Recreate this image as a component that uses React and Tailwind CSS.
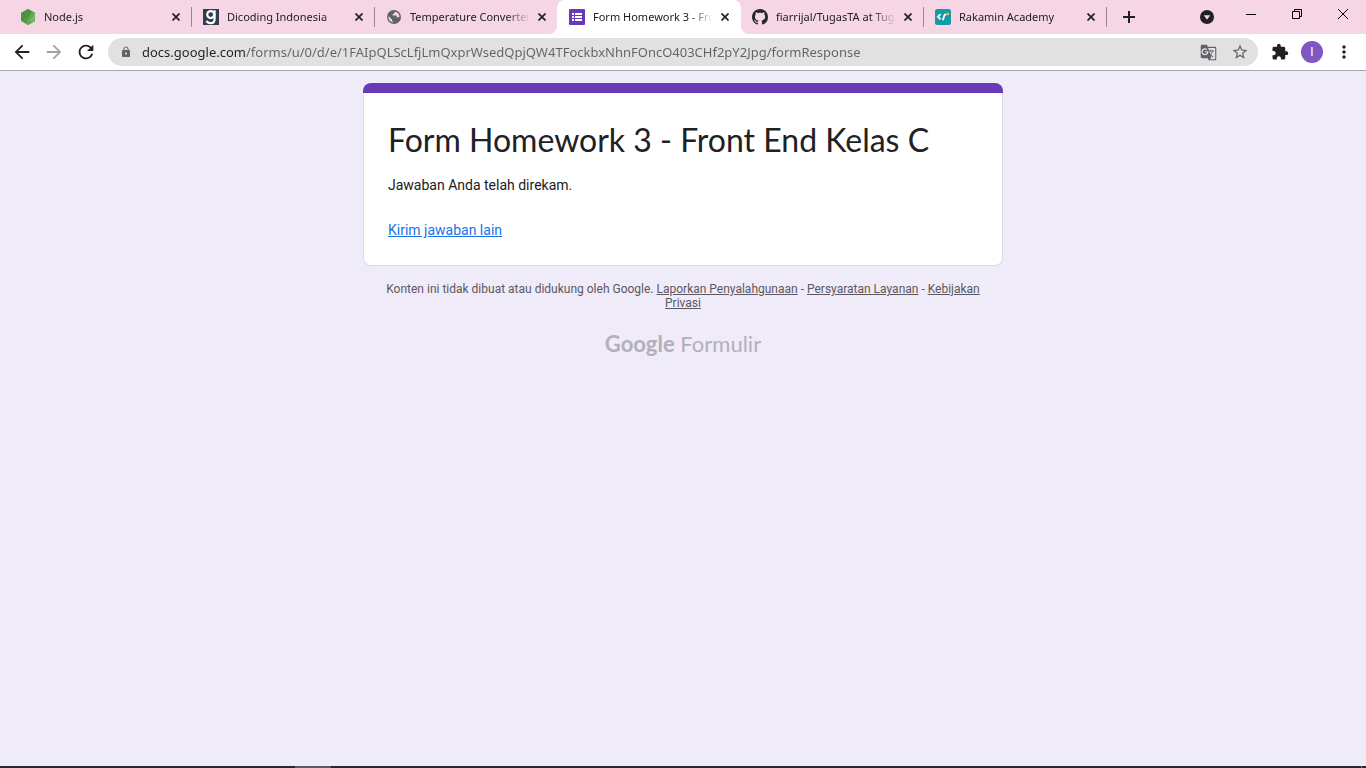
import React from "react";
import {
  MdArrowBack,
  MdArrowForward,
  MdExtension,
  MdGTranslate,
  MdLock,
  MdMoreVert,
  MdRefresh,
  MdStarBorder,
} from "react-icons/md";

function NodeIcon() {
  return (
    <svg viewBox="0 0 16 16" className="size-4" aria-hidden="true">
      <path d="M8 0 15 4v8l-7 4-7-4V4z" fill="#539e43" />
      <path d="M8 0 15 4 1 12V4z" fill="#4c9440" />
      <path d="M12 2.300 15 4v8l-7 4-2-1.200z" fill="#62ab50" />
      <path d="M15 4v8l-3 1.700-3-2.200z" fill="#7cb872" opacity=".7" />
    </svg>
  );
}

function DicodingIcon() {
  return (
    <svg viewBox="0 0 16 16" className="size-4" aria-hidden="true">
      <path d="M0 0h16v16H0z" fill="#2d3e50" />
      <g fill="none" stroke="#fff" strokeWidth="2.200">
        <circle cx="7.700" cy="5.600" r="3.500" />
        <path d="M11.600 1.200v8.800c0 3-1.500 4.200-3.900 4.200-2.200 0-3.500-.8-4-2.500" />
      </g>
    </svg>
  );
}

function GlobeIcon() {
  return (
    <svg viewBox="0 0 16 16" className="size-4" aria-hidden="true">
      <circle cx="8" cy="8" r="7" fill="#5f6368" />
      <path
        d="M2.600 7.200 6 10.400v1c0 .7.500 1.200 1.200 1.200v1c-2.700-.4-4.800-2.700-4.800-5.500 0-.3.100-.6.200-.9zM9.800 2.700c1.900.7 3.400 2.500 3.700 4.600-.4.800-.9 1.200-1.700 1.200-.8 0-1.200-.5-1.200-1.200 0-.6-.3-.9-.9-.9H6.600V5.300c.8 0 1.200-.4 1.200-1.100 0-.6.400-.8 1-.8.6 0 1-.3 1-.7z"
        fill="#f6d5e4"
      />
    </svg>
  );
}

function FormsIcon() {
  return (
    <svg viewBox="0 0 16 16" className="size-4" aria-hidden="true">
      <rect width="16" height="16" rx="1" fill="#673ab7" />
      <path
        d="M3 4h2v2H3zM6 4h7v2H6zM3 7h2v2H3zM6 7h7v2H6zM3 10h2v2H3zM6 10h7v2H6z"
        fill="#fff"
      />
    </svg>
  );
}

function GithubIcon() {
  return (
    <svg viewBox="0 0 16 16" className="size-4" aria-hidden="true">
      <path
        fill="#24292e"
        d="M8 0C3.58 0 0 3.58 0 8c0 3.54 2.29 6.53 5.47 7.59.4.07.55-.17.55-.38 0-.19-.01-.82-.01-1.49-2.01.37-2.53-.49-2.69-.94-.09-.23-.48-.94-.82-1.13-.28-.15-.68-.52-.01-.53.63-.01 1.08.58 1.23.82.72 1.21 1.87.87 2.33.66.07-.52.28-.87.51-1.07-1.78-.2-3.64-.89-3.64-3.95 0-.87.31-1.59.82-2.15-.08-.2-.36-1.02.08-2.12 0 0 .67-.21 2.2.82.64-.18 1.32-.27 2-.27s1.36.09 2 .27c1.53-1.04 2.2-.82 2.2-.82.44 1.1.16 1.92.08 2.12.51.56.82 1.27.82 2.15 0 3.07-1.87 3.75-3.65 3.95.29.25.54.73.54 1.48 0 1.07-.01 1.93-.01 2.2 0 .21.15.46.55.38A8.01 8.01 0 0 0 16 8c0-4.42-3.58-8-8-8z"
      />
    </svg>
  );
}

function RakaminIcon() {
  return (
    <svg viewBox="0 0 16 16" className="size-4" aria-hidden="true">
      <rect width="16" height="16" rx="2.500" fill="#149aa5" />
      <g fill="none" stroke="#fff" strokeWidth="1.800">
        <path d="M5.600 5.200 2.900 7.800l2.700 2.500" />
        <path d="M7.900 11.300 9.200 6.700c.3-1 .8-1.400 1.700-1.400h.6" />
      </g>
      <circle cx="13" cy="5" r="1.300" fill="#f9b91c" />
    </svg>
  );
}

const tabs = [
  { title: "Node.js", icon: <NodeIcon /> },
  { title: "Dicoding Indonesia", icon: <DicodingIcon /> },
  { title: "Temperature Converter", icon: <GlobeIcon /> },
  { title: "Form Homework 3 - Front End", icon: <FormsIcon />, active: true },
  { title: "fiarrijal/TugasTA at TugasTA", icon: <GithubIcon /> },
  { title: "Rakamin Academy", icon: <RakaminIcon /> },
];

function Tab({ title, icon, active, divided }) {
  return (
    <div
      className={
        "relative flex min-w-0 items-center pl-3 " +
        (active ? "-mr-px w-[184px] rounded-t-lg bg-white pr-2" : "w-[183px] pr-[7px]")
      }
    >
      {divided && <span className="absolute left-0 top-[7px] h-5 w-px bg-[#9a8791]" />}
      {active && (
        <>
          <svg viewBox="0 0 8 8" className="absolute -left-2 bottom-0 size-2" aria-hidden="true">
            <path d="M8 0v8H0a8 8 0 0 0 8-8z" fill="#fff" />
          </svg>
          <svg viewBox="0 0 8 8" className="absolute -right-2 bottom-0 size-2" aria-hidden="true">
            <path d="M0 0v8h8a8 8 0 0 1-8-8z" fill="#fff" />
          </svg>
        </>
      )}
      <span className="flex size-4 shrink-0 items-center justify-center">{icon}</span>
      <a
        href="#"
        className="ml-2 min-w-0 flex-1 overflow-hidden whitespace-nowrap text-[11px] leading-4 text-[#202124] [mask-image:linear-gradient(to_right,#000_calc(100%-24px),transparent)]"
      >
        {title}
      </a>
      <button
        type="button"
        aria-label={"Tutup " + title}
        className="ml-1 flex size-4 shrink-0 items-center justify-center"
      >
        <svg viewBox="0 0 8 8" className="size-2" aria-hidden="true">
          <path d="M.5.5l7 7M7.500.5l-7 7" stroke="#202124" strokeWidth="1.700" />
        </svg>
      </button>
    </div>
  );
}

function TabStrip() {
  return (
    <div className="flex h-[34px] bg-[#f6d5e4] pl-2">
      {tabs.map((tab, i) => (
        <Tab
          key={tab.title}
          {...tab}
          divided={i > 0 && !tab.active && !tabs[i - 1].active}
        />
      ))}
      <span className="mt-[7px] h-5 w-px bg-[#9a8791]" />
      <button
        type="button"
        aria-label="Tab baru"
        className="ml-2 flex w-7 items-center justify-center"
      >
        <svg viewBox="0 0 12 12" className="size-3" aria-hidden="true">
          <path d="M6 0v12M0 6h12" stroke="#202124" strokeWidth="2" />
        </svg>
      </button>
      <div className="ml-auto flex items-start">
        <button
          type="button"
          aria-label="Telusuri tab"
          className="mr-[7px] flex h-[34px] w-7 items-center justify-center"
        >
          <svg viewBox="0 0 14 14" className="size-3.5" aria-hidden="true">
            <circle cx="7" cy="7" r="7" fill="#202124" />
            <path d="M3.800 5.200h6.400L7 9.800z" fill="#f6d5e4" />
          </svg>
        </button>
        <button
          type="button"
          aria-label="Minimalkan"
          className="flex h-7 w-[46px] items-center justify-center"
        >
          <svg viewBox="0 0 10 10" className="size-2.5" aria-hidden="true">
            <path d="M0 5h10v1H0z" />
          </svg>
        </button>
        <button
          type="button"
          aria-label="Pulihkan"
          className="flex h-7 w-[46px] items-center justify-center"
        >
          <svg viewBox="0 0 10 10" className="size-2.5" aria-hidden="true">
            <path d="M.5 2.500h7v7h-7zM2.500 2.500v-2h7v7h-2" fill="none" stroke="#000" />
          </svg>
        </button>
        <button
          type="button"
          aria-label="Tutup"
          className="flex h-7 w-[46px] items-center justify-center"
        >
          <svg viewBox="0 0 10 10" className="size-2.5" aria-hidden="true">
            <path d="M0 0l10 10M10 0L0 10" stroke="#000" />
          </svg>
        </button>
      </div>
    </div>
  );
}

function ToolButton({ label, children }) {
  return (
    <button
      type="button"
      aria-label={label}
      className="flex size-7 shrink-0 items-center justify-center text-[#202124]"
    >
      {children}
    </button>
  );
}

function Toolbar() {
  return (
    <div className="flex h-[37px] items-center gap-1 border-b border-[#a9a8ac] bg-white px-2">
      <ToolButton label="Kembali">
        <MdArrowBack className="size-[22px]" />
      </ToolButton>
      <ToolButton label="Maju">
        <MdArrowForward className="size-[22px] text-[#a3a3a5]" />
      </ToolButton>
      <ToolButton label="Muat ulang">
        <MdRefresh className="size-[22px]" />
      </ToolButton>
      <div className="mx-1 flex h-7 min-w-0 flex-1 items-center rounded-full bg-[#e1e1e1] pl-3 pr-1.5 text-[#5f6368]">
        <MdLock className="size-3 shrink-0" />
        <input
          type="text"
          aria-label="Alamat"
          defaultValue="docs.google.com/forms/u/0/d/e/1FAIpQLScLfjLmQxprWsedQpjQW4TFockbxNhnFOncO403CHf2pY2Jpg/formResponse"
          className="ml-2.5 min-w-0 flex-1 bg-[linear-gradient(to_right,#202124_103px,#5f6368_103px)] bg-clip-text text-[13px] leading-5 text-transparent outline-none"
        />
        <button
          type="button"
          aria-label="Terjemahkan halaman ini"
          className="flex size-6 items-center justify-center"
        >
          <MdGTranslate className="size-[17px]" />
        </button>
        <button
          type="button"
          aria-label="Bookmark"
          className="ml-2 flex size-6 items-center justify-center"
        >
          <MdStarBorder className="size-[18px]" />
        </button>
      </div>
      <ToolButton label="Ekstensi">
        <MdExtension className="size-[18px]" />
      </ToolButton>
      <ToolButton label="Profil">
        <span className="flex size-[22px] items-center justify-center rounded-full bg-[#7e57c2] font-[Roboto,sans-serif] text-xs text-white">
          I
        </span>
      </ToolButton>
      <ToolButton label="Menu">
        <MdMoreVert className="size-5" />
      </ToolButton>
    </div>
  );
}

export default function App() {
  return (
    <div className="flex min-h-screen flex-col bg-[#f0ebf8] font-['Noto_Sans',sans-serif]">
      <header>
        <TabStrip />
        <Toolbar />
      </header>
      <main className="flex-1 px-4 pt-3 font-[Roboto,sans-serif]">
        <div className="mx-auto max-w-[640px]">
          <section>
            <div className="h-2.5 rounded-t-lg bg-[#673ab7]" />
            <div className="rounded-b-lg border border-t-0 border-[#dadce0] bg-white px-6 pb-[25px] pt-[27px] text-sm text-[#202124]">
              <h1 className="font-[Lato,sans-serif] text-[32px] leading-10">
                Form Homework 3 - Front End Kelas C
              </h1>
              <p className="mt-[15px]">Jawaban Anda telah direkam.</p>
              <a href="#" className="mt-[25px] inline-block text-[#1a73e8] underline">
                Kirim jawaban lain
              </a>
            </div>
          </section>
          <footer className="mt-4 text-center text-[#5c5860]">
            <p className="px-5 text-xs leading-[14px]">
              Konten ini tidak dibuat atau didukung oleh Google.{" "}
              <a href="#" className="underline">
                Laporkan Penyalahgunaan
              </a>{" "}
              -{" "}
              <a href="#" className="underline">
                Persyaratan Layanan
              </a>{" "}
              -{" "}
              <a href="#" className="underline">
                Kebijakan Privasi
              </a>
            </p>
            <a
              href="#"
              className="mt-5 inline-block font-[Lato,sans-serif] text-[22px] leading-7 text-[#b3afba]"
            >
              <span className="font-bold">Google</span> Formulir
            </a>
          </footer>
        </div>
      </main>
      <div className="flex h-0.5 bg-[#26262c] pl-[295px]">
        <span className="w-9 bg-[#5a5a5e]" />
        <span className="ml-auto mr-1 w-px bg-[#77777b]" />
      </div>
    </div>
  );
}
